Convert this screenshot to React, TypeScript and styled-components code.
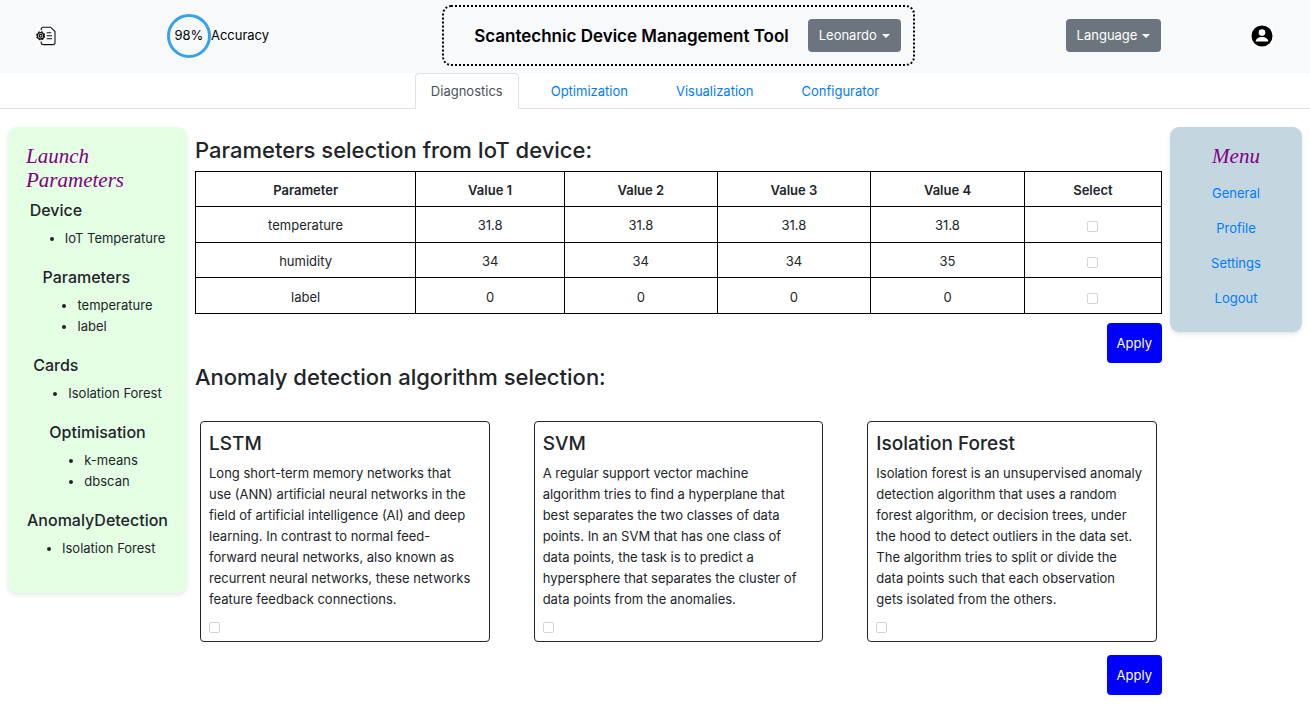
import React from "react";
import styled, { createGlobalStyle, css } from "styled-components";

const GlobalStyle = createGlobalStyle`
  *, *::before, *::after { box-sizing: border-box; }
  body {
    margin: 0;
    background: #fff;
    color: #212529;
    font-family: Inter, "Liberation Sans", sans-serif;
    font-size: 13px;
    line-height: 21px;
  }
  h1, h2, h3, h4, p, ul { margin: 0; padding: 0; }
  button, input { font: inherit; }
`;

const TopBar = styled.header`
  display: grid;
  grid-template-columns: 92fr 252fr 669fr 201fr 96fr;
  align-items: center;
  justify-items: center;
  height: 73px;
  padding-bottom: 2px;
  background: #f8f9fb;
`;

const IconButton = styled.button`
  display: flex;
  padding: 0;
  border: 0;
  background: #fbfbfc;
  cursor: pointer;
`;

const Accuracy = styled.div`
  display: flex;
  align-items: center;
  color: #000;
`;

const AccuracyRing = styled.span`
  display: flex;
  align-items: center;
  justify-content: center;
  width: 44px;
  height: 44px;
  border: 3px solid #36a2eb;
  border-radius: 50%;
`;

const Brand = styled.div`
  display: flex;
  align-items: center;
  gap: 19px;
  height: 61px;
  padding: 0 12px 0 30px;
  border: 2px dotted #000;
  border-radius: 9px;
`;

const BrandName = styled.h1`
  color: #000;
  font-size: 17px;
  font-weight: 600;
  line-height: 26px;
  white-space: nowrap;
`;

const DropdownButton = styled.button`
  display: flex;
  align-items: center;
  gap: 5px;
  height: 33px;
  padding: 0 11px;
  border: 0;
  border-radius: 4px;
  background: #6c757d;
  color: #fff;
  cursor: pointer;

  &::after {
    content: "";
    border: 4px solid transparent;
    border-top-color: currentColor;
    border-bottom: 0;
  }
`;

const Tabs = styled.nav`
  display: flex;
  justify-content: center;
  gap: 16px;
  height: 36px;
  border-bottom: 1px solid #dee2e6;
`;

const Tab = styled.a<{ $active?: boolean }>`
  height: 36px;
  padding: 7px 15px;
  border: 1px solid transparent;
  border-bottom: 0;
  border-radius: 4px 4px 0 0;
  color: #007bff;
  text-decoration: none;
  ${(p) =>
    p.$active &&
    css`
      border-color: #dee2e6;
      background: #fff;
      color: #495057;
    `}
`;

const Body = styled.div`
  display: grid;
  grid-template-columns: 179px minmax(0, 1fr) 132px;
  align-items: start;
  gap: 8px;
  padding: 18px 8px 11px;
`;

const Panel = styled.aside<{ $color: string }>`
  display: flex;
  flex-direction: column;
  align-items: center;
  padding: 17px 18px 16px;
  border-radius: 9px;
  background: ${(p) => p.$color};
  box-shadow: 0 2px 4px rgba(0, 0, 0, 0.1);
`;

const PanelTitle = styled.h2`
  margin-bottom: 8px;
  color: #800080;
  font-family: "Apple Chancery", "Z003", "Liberation Serif", serif;
  font-size: 21px;
  font-style: italic;
  font-weight: 400;
  line-height: 24px;
`;

const ParamHeading = styled.h3`
  margin-bottom: 7px;
  font-size: 16px;
  font-weight: 500;
  line-height: 21px;
`;

const ParamList = styled.ul`
  margin-bottom: 18px;
  padding-left: 35px;
`;

const MenuLink = styled.a`
  padding: 7px 0;
  color: #007bff;
  text-decoration: none;
`;

const Main = styled.main`
  display: flex;
  flex-direction: column;
  padding-top: 9px;
`;

const SectionTitle = styled.h2`
  font-size: 22px;
  font-weight: 500;
  line-height: 29px;
`;

const DataTable = styled.table`
  width: 100%;
  height: 143px;
  margin: 6px 0 9px;
  border-collapse: collapse;
  table-layout: fixed;
  line-height: 20px;
  text-align: center;
`;

const Column = styled.col<{ $share: number }>`
  width: ${(p) => p.$share}%;
`;

const Cell = styled.td`
  padding: 8px 7px 6px;
  border: 1px solid #000;
`;

const HeadCell = styled(Cell).attrs({ as: "th", scope: "col" })`
  font-weight: 600;
`;

const Checkbox = styled.input.attrs({ type: "checkbox" })`
  appearance: none;
  display: inline-block;
  width: 11px;
  height: 11px;
  margin: 0;
  border: 1px solid #d4d4d4;
  border-radius: 2px;
  background: #fff;
  vertical-align: middle;

  &:checked {
    border-color: #007bff;
    background: #007bff;
  }
`;

const ApplyButton = styled.button`
  align-self: flex-end;
  height: 40px;
  padding: 0 10px;
  border: 0;
  border-radius: 4px;
  background: #0000ff;
  color: #fff;
  cursor: pointer;
`;

const Cards = styled.div`
  display: grid;
  grid-template-columns: repeat(3, minmax(0, 1fr));
  gap: 44px;
  padding: 29px 5px 13px;
`;

const Card = styled.article`
  display: flex;
  flex-direction: column;
  padding: 9px 12px 8px 8px;
  border: 1px solid #212529;
  border-radius: 4px;
`;

const CardTitle = styled.h3`
  margin-bottom: 7px;
  font-size: 19px;
  font-weight: 500;
  line-height: 25px;
`;

const CardText = styled.p`
  margin-bottom: 12px;
`;

const tabs = ["Diagnostics", "Optimization", "Visualization", "Configurator"];
const menu = ["General", "Profile", "Settings", "Logout"];

const launch = [
  { name: "Device", items: ["IoT Temperature"] },
  { name: "Parameters", items: ["temperature", "label"] },
  { name: "Cards", items: ["Isolation Forest"] },
  { name: "Optimisation", items: ["k-means", "dbscan"] },
  { name: "AnomalyDetection", items: ["Isolation Forest"] },
];

const columns = [
  { name: "Parameter", share: 22.8 },
  { name: "Value 1", share: 15.4 },
  { name: "Value 2", share: 15.8 },
  { name: "Value 3", share: 15.9 },
  { name: "Value 4", share: 15.9 },
  { name: "Select", share: 14.2 },
];

const rows = [
  { name: "temperature", values: ["31.8", "31.8", "31.8", "31.8"] },
  { name: "humidity", values: ["34", "34", "34", "35"] },
  { name: "label", values: ["0", "0", "0", "0"] },
];

const algorithms = [
  {
    name: "LSTM",
    text: "Long short-term memory networks that use (ANN) artificial neural networks in the field of artificial intelligence (AI) and deep learning. In contrast to normal feed-forward neural networks, also known as recurrent neural networks, these networks feature feedback connections.",
  },
  {
    name: "SVM",
    text: "A regular support vector machine algorithm\u00a0tries to find a hyperplane that best separates the two classes of data points. In an SVM that has one class of data\u00a0points, the task is to predict a hypersphere that separates the cluster of data points from the anomalies.",
  },
  {
    name: "Isolation Forest",
    text: "Isolation forest is an unsupervised anomaly detection algorithm that uses a random forest algorithm, or decision trees, under the hood to detect outliers in the data set. The algorithm tries to split or divide the data points such that each observation gets isolated from the others.",
  },
];

const ConfigIcon = () => (
  <svg width="20" height="20" viewBox="0 0 20 20" fill="none" stroke="#111" strokeWidth="1.1" aria-hidden="true">
    <path d="M5.2 4.2V3.2Q5.2 1.2 7.4 1.2H14.6L19 5.6V16.4Q19 18.6 16.8 18.6H7.4Q5.2 18.6 5.2 16.4V15.4" />
    <path d="M10.7 6.8H15.2M10.7 9.8H16M10.7 12.8H16" />
    <circle cx="4.6" cy="9.8" r="3.2" strokeWidth="1.4" />
    <circle cx="4.6" cy="9.8" r="4" strokeWidth="1.1" strokeDasharray="1.8 1.34" />
    <circle cx="4.6" cy="9.8" r="1.4" strokeWidth="1.2" />
  </svg>
);

const UserIcon = () => (
  <svg width="22" height="22" viewBox="0 0 22 22" aria-hidden="true">
    <rect width="22" height="22" fill="#fff" />
    <circle cx="11" cy="11" r="10.5" fill="#000" />
    <circle cx="11" cy="7.6" r="3.3" fill="#fff" />
    <path d="M4.6 16.4C5 13.4 7.4 11.9 11 11.9S17 13.4 17.4 16.4Z" fill="#fff" />
  </svg>
);

export default function App() {
  return (
    <>
      <GlobalStyle />
      <TopBar>
        <IconButton aria-label="Configuration">
          <ConfigIcon />
        </IconButton>
        <Accuracy>
          <AccuracyRing>98%</AccuracyRing>
          Accuracy
        </Accuracy>
        <Brand>
          <BrandName>Scantechnic Device Management Tool</BrandName>
          <DropdownButton>Leonardo</DropdownButton>
        </Brand>
        <DropdownButton>Language</DropdownButton>
        <IconButton aria-label="Account">
          <UserIcon />
        </IconButton>
      </TopBar>
      <Tabs>
        {tabs.map((t, i) => (
          <Tab key={t} href={`#${t}`} $active={i === 0}>
            {t}
          </Tab>
        ))}
      </Tabs>
      <Body>
        <Panel $color="#e5ffe5">
          <PanelTitle>Launch Parameters</PanelTitle>
          {launch.map((g) => (
            <section key={g.name}>
              <ParamHeading>{g.name}</ParamHeading>
              <ParamList>
                {g.items.map((item) => (
                  <li key={item}>{item}</li>
                ))}
              </ParamList>
            </section>
          ))}
        </Panel>
        <Main>
          <SectionTitle>Parameters selection from IoT device:</SectionTitle>
          <DataTable>
            <colgroup>
              {columns.map((c) => (
                <Column key={c.name} $share={c.share} />
              ))}
            </colgroup>
            <thead>
              <tr>
                {columns.map((c) => (
                  <HeadCell key={c.name}>{c.name}</HeadCell>
                ))}
              </tr>
            </thead>
            <tbody>
              {rows.map((r) => (
                <tr key={r.name}>
                  <Cell>{r.name}</Cell>
                  {r.values.map((v, i) => (
                    <Cell key={i}>{v}</Cell>
                  ))}
                  <Cell>
                    <Checkbox aria-label={`Select ${r.name}`} />
                  </Cell>
                </tr>
              ))}
            </tbody>
          </DataTable>
          <ApplyButton>Apply</ApplyButton>
          <SectionTitle>Anomaly detection algorithm selection:</SectionTitle>
          <Cards>
            {algorithms.map((a) => (
              <Card key={a.name}>
                <CardTitle>{a.name}</CardTitle>
                <CardText>{a.text}</CardText>
                <Checkbox aria-label={`Use ${a.name}`} />
              </Card>
            ))}
          </Cards>
          <ApplyButton>Apply</ApplyButton>
        </Main>
        <Panel $color="#c4d7e0">
          <PanelTitle>Menu</PanelTitle>
          {menu.map((m) => (
            <MenuLink key={m} href={`#${m}`}>
              {m}
            </MenuLink>
          ))}
        </Panel>
      </Body>
    </>
  );
}
